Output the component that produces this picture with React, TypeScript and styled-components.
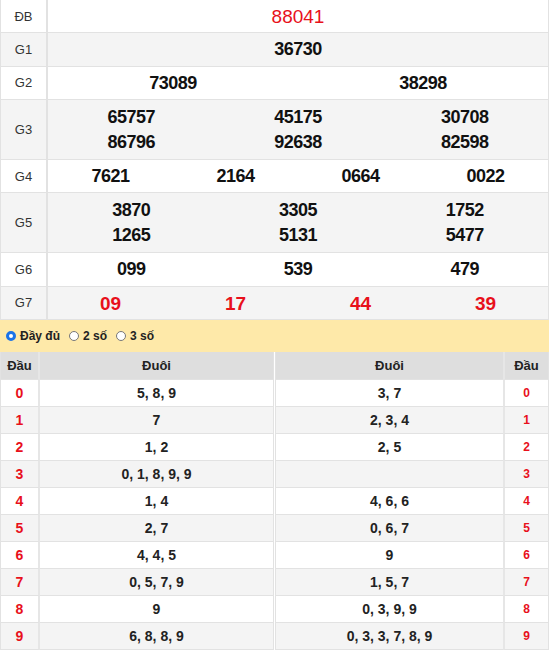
import React from "react";
import styled, { createGlobalStyle } from "styled-components";

const Global = createGlobalStyle`
  html, body { margin: 0; padding: 0; background: #fff; }
  body { font-family: "Liberation Sans", Arial, sans-serif; color: #222; }
`;

const Page = styled.div`
  width: 549px;
`;

const Prizes = styled.div`
  border-left: 1px solid #e2e2e2;
  border-right: 1px solid #e2e2e2;
`;

const PrizeRow = styled.div<{ $alt: boolean; $h: number }>`
  box-sizing: border-box;
  display: grid;
  grid-template-columns: 47px 1fr;
  height: ${(p) => p.$h}px;
  border-bottom: 1px solid #e2e2e2;
  background: ${(p) => (p.$alt ? "#f4f4f4" : "#fff")};
`;

const Label = styled.div`
  display: flex;
  align-items: center;
  justify-content: center;
  font-size: 13px;
  color: #333;
  border-right: 2px solid #e2e2e2;
`;

const Values = styled.div<{ $cols: number }>`
  display: grid;
  grid-template-columns: repeat(${(p) => p.$cols}, 1fr);
  align-content: center;
  row-gap: 4px;
  padding-top: 1px;
`;

const Num = styled.div<{ $red?: boolean; $big?: boolean; $regular?: boolean }>`
  text-align: center;
  font-size: ${(p) => (p.$big || p.$regular ? 19 : 18)}px;
  letter-spacing: ${(p) => (p.$big || p.$regular ? 0 : -0.5)}px;
  line-height: 21px;
  font-weight: ${(p) => (p.$regular ? 400 : 700)};
  color: ${(p) => (p.$red ? "#e8101b" : "#111")};
`;

const RadioBar = styled.div`
  height: 32px;
  background: #fee9a9;
  display: flex;
  align-items: center;
  padding-left: 6px;
  gap: 9px;
  font-size: 12px;
  font-weight: 700;
  color: #222;
`;

const RadioItem = styled.label`
  display: flex;
  align-items: center;
  gap: 3px;
`;

const RadioDot = styled.span<{ $on?: boolean }>`
  width: 10px;
  height: 10px;
  border-radius: 50%;
  box-sizing: border-box;
  border: ${(p) => (p.$on ? "3px solid #1a73e8" : "1px solid #777")};
  background: #fff;
  margin-right: 1px;
`;

const Tables = styled.div`
  display: grid;
  grid-template-columns: 274px 274px;
  column-gap: 1px;
`;

const LoTable = styled.div<{ $right?: boolean }>`
  display: grid;
  grid-template-columns: ${(p) => (p.$right ? "1fr 45px" : "39px 1fr")};
  grid-template-rows: 28px;
  grid-auto-rows: 27px;
  border-left: 1px solid #e2e2e2;
  border-right: 1px solid #e2e2e2;
`;

const Head = styled.div<{ $sep?: "l" | "r" }>`
  background: #dedede;
  display: flex;
  align-items: center;
  justify-content: center;
  font-size: 13px;
  font-weight: 700;
  color: #222;
  border-bottom: 1px solid #e2e2e2;
  ${(p) => (p.$sep === "l" ? "border-left: 2px solid #e6e6e6;" : "")}
  ${(p) => (p.$sep === "r" ? "border-right: 2px solid #e6e6e6;" : "")}
`;

const Cell = styled.div<{
  $alt: boolean;
  $sep?: "l" | "r";
  $head?: boolean;
  $small?: boolean;
}>`
  background: ${(p) => (p.$alt ? "#f4f4f4" : "#fff")};
  display: flex;
  align-items: center;
  justify-content: center;
  border-bottom: 1px solid #e2e2e2;
  font-weight: 700;
  font-size: ${(p) => (p.$small ? 12 : 14)}px;
  color: ${(p) => (p.$head ? "#e8101b" : "#222")};
  ${(p) => (p.$sep === "l" ? "border-left: 2px solid #e6e6e6;" : "")}
  ${(p) => (p.$sep === "r" ? "border-right: 2px solid #e6e6e6;" : "")}
`;

const prizes: { label: string; cols: number; nums: string[]; red?: boolean; big?: boolean; regular?: boolean }[] = [
  { label: "ĐB", cols: 1, nums: ["88041"], red: true, regular: true },
  { label: "G1", cols: 1, nums: ["36730"] },
  { label: "G2", cols: 2, nums: ["73089", "38298"] },
  { label: "G3", cols: 3, nums: ["65757", "45175", "30708", "86796", "92638", "82598"] },
  { label: "G4", cols: 4, nums: ["7621", "2164", "0664", "0022"] },
  { label: "G5", cols: 3, nums: ["3870", "3305", "1752", "1265", "5131", "5477"] },
  { label: "G6", cols: 3, nums: ["099", "539", "479"] },
  { label: "G7", cols: 4, nums: ["09", "17", "44", "39"], red: true, big: true },
];

const dauList = ["5, 8, 9", "7", "1, 2", "0, 1, 8, 9, 9", "1, 4", "2, 7", "4, 4, 5", "0, 5, 7, 9", "9", "6, 8, 8, 9"];
const duoiList = ["3, 7", "2, 3, 4", "2, 5", "", "4, 6, 6", "0, 6, 7", "9", "1, 5, 7", "0, 3, 9, 9", "0, 3, 3, 7, 8, 9"];

export default function App() {
  return (
    <Page>
      <Global />
      <Prizes>
        {prizes.map((p, i) => (
          <PrizeRow key={p.label} $alt={i % 2 === 1} $h={p.nums.length > p.cols ? 60 : 33.33}>
            <Label>{p.label}</Label>
            <Values $cols={p.cols}>
              {p.nums.map((n, j) => (
                <Num key={j} $red={p.red} $big={p.big} $regular={p.regular}>
                  {n}
                </Num>
              ))}
            </Values>
          </PrizeRow>
        ))}
      </Prizes>
      <RadioBar>
        <RadioItem>
          <RadioDot $on />
          Đầy đủ
        </RadioItem>
        <RadioItem>
          <RadioDot />2 số
        </RadioItem>
        <RadioItem>
          <RadioDot />3 số
        </RadioItem>
      </RadioBar>
      <Tables>
        <LoTable>
          <Head $sep="r">Đầu</Head>
          <Head>Đuôi</Head>
          {dauList.map((v, i) => (
            <React.Fragment key={i}>
              <Cell $alt={i % 2 === 1} $head $sep="r">
                {i}
              </Cell>
              <Cell $alt={i % 2 === 1}>{v}</Cell>
            </React.Fragment>
          ))}
        </LoTable>
        <LoTable $right>
          <Head>Đuôi</Head>
          <Head $sep="l">Đầu</Head>
          {duoiList.map((v, i) => (
            <React.Fragment key={i}>
              <Cell $alt={i % 2 === 1}>{v}</Cell>
              <Cell $alt={i % 2 === 1} $head $small $sep="l">
                {i}
              </Cell>
            </React.Fragment>
          ))}
        </LoTable>
      </Tables>
    </Page>
  );
}
